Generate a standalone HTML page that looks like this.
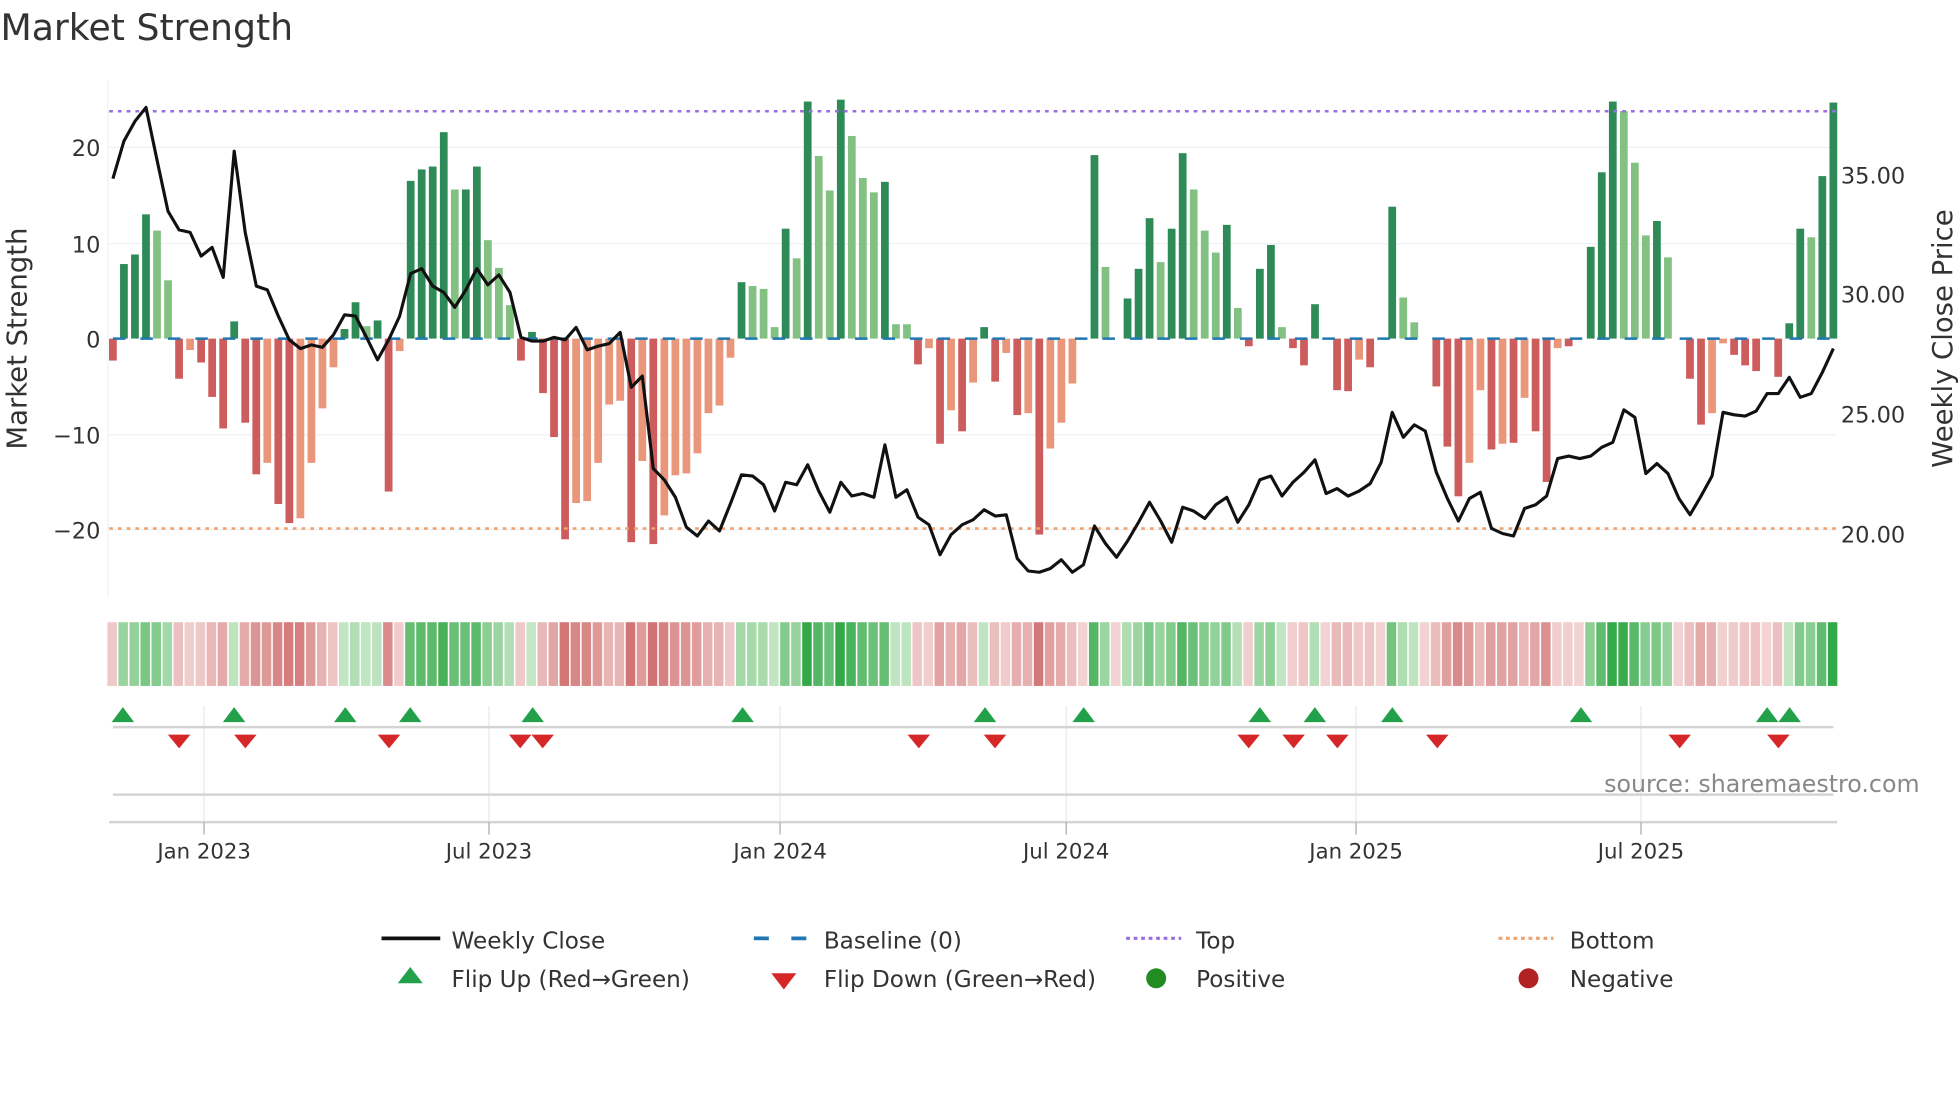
<!DOCTYPE html>
<html><head><meta charset="utf-8"><style>
html,body{margin:0;padding:0;background:#fff;}
svg{display:block;font-family:"DejaVu Sans","Liberation Sans",sans-serif;}
</style></head><body>
<svg id="s" width="1960" height="1102" viewBox="0 0 1568 882" xmlns="http://www.w3.org/2000/svg">
<rect width="1568" height="882" fill="#fff"/>
<text x="0" y="32" font-size="29" fill="#333">Market Strength</text>
<g stroke="#eef0f5" stroke-width="1">
<line x1="87" y1="118" x2="1470" y2="118"/><line x1="87" y1="195" x2="1470" y2="195"/>
<line x1="87" y1="348" x2="1470" y2="348"/><line x1="87" y1="424" x2="1470" y2="424"/>
</g>
<line x1="86" y1="65" x2="86" y2="478" stroke="#eef0f5"/>
<g font-size="18" fill="#333" text-anchor="end">
<text x="80" y="125">20</text><text x="80" y="202">10</text><text x="80" y="278">0</text>
<text x="80" y="355">−10</text><text x="80" y="431">−20</text>
</g>
<g font-size="18" fill="#333">
<text x="1473" y="147">35.00</text><text x="1473" y="242">30.00</text>
<text x="1473" y="338">25.00</text><text x="1473" y="434">20.00</text>
</g>
<text transform="translate(21,271) rotate(-90)" font-size="22" fill="#333" text-anchor="middle">Market Strength</text>
<text transform="translate(1562,271) rotate(-90)" font-size="22" fill="#333" text-anchor="middle">Weekly Close Price</text>
<g id="bars"></g>
<line x1="87" y1="89" x2="1470" y2="89" stroke="#9b6ee0" stroke-width="2" stroke-dasharray="3,4"/>
<line x1="87" y1="423" x2="1470" y2="423" stroke="#f0a06a" stroke-width="2" stroke-dasharray="3,4"/>
<line x1="90" y1="271" x2="1470" y2="271" stroke="#1f77b4" stroke-width="2" stroke-dasharray="10,12"/>
<polyline id="price" fill="none" stroke="#111" stroke-width="2.5" stroke-linejoin="round"/>
<g id="heat"></g>
<g stroke="#e6e8ee" stroke-width="1">
<line x1="163" y1="565" x2="163" y2="658"/><line x1="391" y1="565" x2="391" y2="658"/>
<line x1="624" y1="565" x2="624" y2="658"/><line x1="853" y1="565" x2="853" y2="658"/>
<line x1="1085" y1="565" x2="1085" y2="658"/><line x1="1313" y1="565" x2="1313" y2="658"/>
</g>
<line x1="90" y1="582" x2="1467" y2="582" stroke="#d4d4d4" stroke-width="2"/>
<line x1="90" y1="636" x2="1467" y2="636" stroke="#d4d4d4" stroke-width="2"/>
<line x1="87" y1="658" x2="1470" y2="658" stroke="#d4d4d4" stroke-width="2"/>
<g stroke="#aaa" stroke-width="1">
<line x1="163" y1="658" x2="163" y2="668"/><line x1="391" y1="658" x2="391" y2="668"/>
<line x1="624" y1="658" x2="624" y2="668"/><line x1="853" y1="658" x2="853" y2="668"/>
<line x1="1085" y1="658" x2="1085" y2="668"/><line x1="1313" y1="658" x2="1313" y2="668"/>
</g>
<g id="marks"></g>
<g font-size="17" fill="#333" text-anchor="middle">
<text x="163" y="687">Jan 2023</text><text x="391" y="687">Jul 2023</text><text x="624" y="687">Jan 2024</text>
<text x="853" y="687">Jul 2024</text><text x="1085" y="687">Jan 2025</text><text x="1313" y="687">Jul 2025</text>
</g>
<text x="1536" y="634" font-size="19" fill="#888" text-anchor="end">source: sharemaestro.com</text>
<g font-size="18.5" fill="#333">
<line x1="305" y1="751" x2="352" y2="751" stroke="#111" stroke-width="3"/><text x="361" y="759">Weekly Close</text>
<line x1="603" y1="751" x2="647" y2="751" stroke="#1f77b4" stroke-width="3" stroke-dasharray="12,18"/><text x="659" y="759">Baseline (0)</text>
<line x1="901" y1="751" x2="945" y2="751" stroke="#9b6ee0" stroke-width="2.5" stroke-dasharray="3,3"/><text x="957" y="759">Top</text>
<line x1="1199" y1="751" x2="1243" y2="751" stroke="#f0a06a" stroke-width="2.5" stroke-dasharray="3,3"/><text x="1256" y="759">Bottom</text>
<polygon points="328,774 338,787 318,787" fill="#22a04a"/><text x="361" y="790">Flip Up (Red→Green)</text>
<polygon points="617,779 637,779 627,792" fill="#d62728"/><text x="659" y="790">Flip Down (Green→Red)</text>
<circle cx="925" cy="783" r="8" fill="#228b22"/><text x="957" y="790">Positive</text>
<circle cx="1223" cy="783" r="8" fill="#b22222"/><text x="1256" y="790">Negative</text>
</g>
</svg>
<script>
var ns="http://www.w3.org/2000/svg";
function el(t,a,p){var e=document.createElementNS(ns,t);for(var k in a)e.setAttribute(k,a[k]);document.getElementById(p).appendChild(e);return e;}
var v=[[-2.3,'R'],[7.8,'D'],[8.8,'D'],[13,'D'],[11.3,'L'],[6.1,'L'],[-4.2,'R'],[-1.2,'S'],[-2.5,'R'],[-6.1,'R'],[-9.4,'R'],[1.8,'D'],[-8.8,'R'],[-14.2,'R'],[-13,'S'],[-17.3,'R'],[-19.3,'R'],[-18.8,'S'],[-13,'S'],[-7.3,'S'],[-3,'S'],[1,'D'],[3.8,'D'],[1.3,'L'],[1.9,'D'],[-16,'R'],[-1.3,'S'],[16.5,'D'],[17.7,'D'],[18,'D'],[21.6,'D'],[15.6,'L'],[15.6,'D'],[18,'D'],[10.3,'L'],[7.4,'L'],[3.5,'L'],[-2.3,'R'],[0.7,'D'],[-5.7,'R'],[-10.3,'R'],[-21,'R'],[-17.2,'S'],[-17,'S'],[-13,'S'],[-6.9,'S'],[-6.5,'S'],[-21.3,'R'],[-12.8,'S'],[-21.5,'R'],[-18.5,'S'],[-14.3,'S'],[-14.1,'S'],[-12,'S'],[-7.8,'S'],[-7,'S'],[-2,'S'],[5.9,'D'],[5.5,'L'],[5.2,'L'],[1.2,'L'],[11.5,'D'],[8.4,'L'],[24.8,'D'],[19.1,'L'],[15.5,'L'],[25,'D'],[21.2,'L'],[16.8,'L'],[15.3,'L'],[16.4,'D'],[1.5,'L'],[1.5,'L'],[-2.7,'R'],[-1,'S'],[-11,'R'],[-7.5,'S'],[-9.7,'R'],[-4.6,'S'],
[1.2,'D'],[-4.5,'R'],[-1.5,'S'],[-8,'R'],[-7.8,'S'],[-20.5,'R'],[-11.5,'S'],[-8.8,'S'],[-4.7,'S'],[0,'D'],[19.2,'D'],[7.5,'L'],[0,'L'],[4.2,'D'],[7.3,'D'],[12.6,'D'],[8,'L'],[11.5,'D'],[19.4,'D'],[15.6,'L'],[11.3,'L'],[9,'L'],[11.9,'D'],[3.2,'L'],[-0.8,'R'],[7.3,'D'],[9.8,'D'],[1.2,'L'],[-1,'R'],[-2.8,'R'],[3.6,'D'],[0,'L'],[-5.4,'R'],[-5.5,'R'],[-2.2,'S'],[-3,'R'],[0,'L'],[13.8,'D'],[4.3,'L'],[1.7,'L'],[0,'L'],[-5,'R'],[-11.3,'R'],[-16.5,'R'],[-13,'S'],[-5.4,'S'],[-11.6,'R'],[-11,'S'],[-10.9,'R'],[-6.2,'S'],[-9.7,'R'],[-15,'R'],[-1,'S'],[-0.8,'R'],[0,'L'],[9.6,'D'],[17.4,'D'],[24.8,'D'],[23.8,'L'],[18.4,'L'],[10.8,'L'],[12.3,'D'],[8.5,'L'],[0,'L'],[-4.2,'R'],[-9,'R'],[-7.8,'S'],[-0.5,'S'],[-1.7,'R'],[-2.8,'R'],[-3.4,'R'],[0,'L'],[-4,'R'],[1.6,'D'],[11.5,'D'],[10.6,'L'],[17,'D'],[24.7,'D']];
var col={D:'#2e8b57',L:'#82c182',R:'#cd5c5c',S:'#e9967a'};
var n=v.length,sp=(1467-90)/(n-1);
for(var i=0;i<n;i++){var x=90+i*sp,val=v[i][0],h=Math.abs(val)*7.65;
 if(h>0.3)el('rect',{x:x-3.1,y:val>0?271-h:271,width:6.2,height:h,fill:col[v[i][1]]},'bars');
 var a=Math.min(1,Math.abs(val)/25),c;
 if(val>0){c='rgb('+Math.round(200-150*a)+','+Math.round(232-64*a)+','+Math.round(200-130*a)+')';}
 else{c='rgb('+Math.round(242-38*a)+','+Math.round(210-110*a)+','+Math.round(210-110*a)+')';}
 el('rect',{x:x-4.4,y:498,width:7.6,height:51,fill:c},'heat');}
var p=[143,113,97,86,128,169,184,186,205,198,222,121,186,229,232,253,272,279,276,278,268,252,253,270,288,272,253,219,215,229,234,246,232,215,228,220,234,270,273,273,270,272,262,280,277,275,266,310,301,375,384,398,422,429,417,425,403,380,381,388,409,386,388,372,393,410,386,397,395,398,356,398,392,414,420,444,428,420,416,408,413,412,447,457,458,455,448,458,452,421,435,446,433,418,402,417,434,406,409,415,404,398,418,404,384,381,397,386,378,368,395,391,397,393,387,370,330,350,340,345,378,399,417,399,394,423,427,429,407,404,397,367,365,367,365,358,354,328,334,379,371,379,399,412,397,381,330,332,333,329,315,315,302,318,315,298,279];
var pts=[],ps=(1467-90)/(p.length-1);for(i=0;i<p.length;i++)pts.push((90+i*ps).toFixed(1)+','+p[i]);
document.getElementById('price').setAttribute('points',pts.join(' '));
[98,187,276,328,426,594,788,867,1008,1052,1114,1265,1414,1432].forEach(function(x){el('polygon',{points:x+',566 '+(x+9)+',578 '+(x-9)+',578',fill:'#22a04a'},'marks');});
[143,196,311,416,434,735,796,999,1035,1070,1150,1344,1423].forEach(function(x){el('polygon',{points:(x-9)+',588 '+(x+9)+',588 '+x+',599',fill:'#d62728'},'marks');});
</script>
</body></html>
